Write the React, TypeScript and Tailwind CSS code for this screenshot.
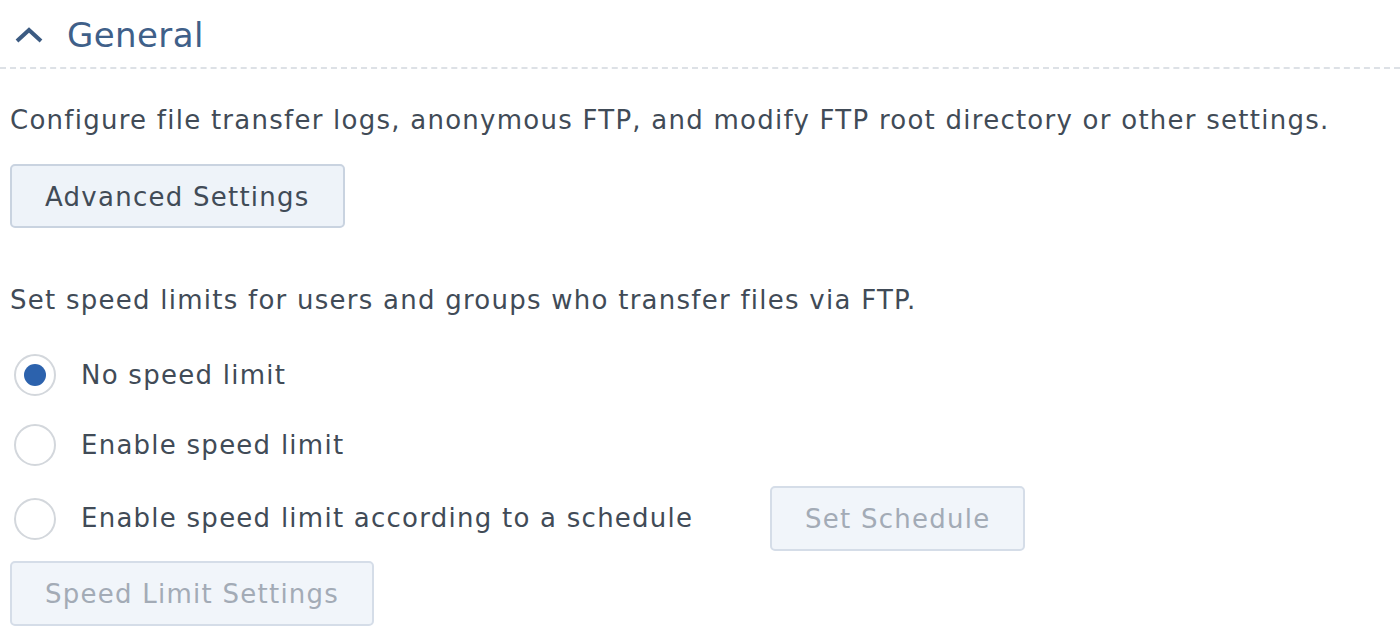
import { useState } from "react";

const options = [
  { id: "none", label: "No speed limit" },
  { id: "on", label: "Enable speed limit" },
  { id: "schedule", label: "Enable speed limit according to a schedule" },
];

function Radio({ checked }: { checked: boolean }) {
  return (
    <span className="flex h-[42px] w-[42px] shrink-0 items-center justify-center rounded-full border-2 border-[#d3d7dc] bg-white">
      {checked && <span className="h-[22px] w-[22px] rounded-full bg-[#2c62ad]" />}
    </span>
  );
}

function Btn({ children, disabled }: { children: React.ReactNode; disabled?: boolean }) {
  return (
    <button
      className={
        disabled
          ? "h-[65px] rounded-[5px] border-2 border-[#d5dde8] bg-[#f1f5fa] px-[33px] pt-[2px] text-[26px] tracking-[1.25px] text-[#a3abb6]"
          : "h-[64px] rounded-[5px] border-2 border-[#c9d3e0] bg-[#eef3f9] px-[33px] pt-[2px] text-[26px] tracking-[1.25px] text-[#414b57]"
      }
    >
      {children}
    </button>
  );
}

export default function App() {
  const [speed, setSpeed] = useState("none");

  return (
    <div className="h-[642px] w-[1400px] overflow-hidden bg-white font-['DejaVu_Sans',sans-serif] text-[#414b57]">
      {/* Section header */}
      <div className="flex h-[69px] items-center border-b-2 border-dashed border-[#dde1e6] pt-[3px]">
        <svg width="30" height="18" viewBox="0 0 30 18" className="ml-[14px] mr-[23px]">
          <polyline points="3,15 15,4 27,15" fill="none" stroke="#3c5b82" strokeWidth="4" />
        </svg>
        <span className="text-[34px] tracking-[0.4px] text-[#3f6089]">General</span>
      </div>

      <div className="px-[10px] tracking-[1.25px]">
        <p className="mt-[33px] text-[26px] leading-[36px]">
          Configure file transfer logs, anonymous FTP, and modify FTP root directory or other settings.
        </p>
        <div className="mt-[26px]">
          <Btn>Advanced Settings</Btn>
        </div>

        <p className="mt-[54px] text-[26px] leading-[36px]">
          Set speed limits for users and groups who transfer files via FTP.
        </p>

        <div className="mt-[32px] flex flex-col">
          {options.map((o, i) => (
            <label
              key={o.id}
              onClick={() => setSpeed(o.id)}
              className={
                i === 2
                  ? "mt-[16px] flex h-[65px] cursor-pointer items-center pl-[4px]"
                  : i === 1
                    ? "mt-[20px] flex h-[50px] cursor-pointer items-center pl-[4px]"
                    : "flex h-[50px] cursor-pointer items-center pl-[4px]"
              }
            >
              <Radio checked={speed === o.id} />
              <span className={i === 2 ? "ml-[25px] w-[689px] text-[26px]" : "ml-[25px] text-[26px]"}>{o.label}</span>
              {i === 2 && <Btn disabled>Set Schedule</Btn>}
            </label>
          ))}
        </div>

        <div className="mt-[10px]">
          <Btn disabled>Speed Limit Settings</Btn>
        </div>
      </div>
    </div>
  );
}
